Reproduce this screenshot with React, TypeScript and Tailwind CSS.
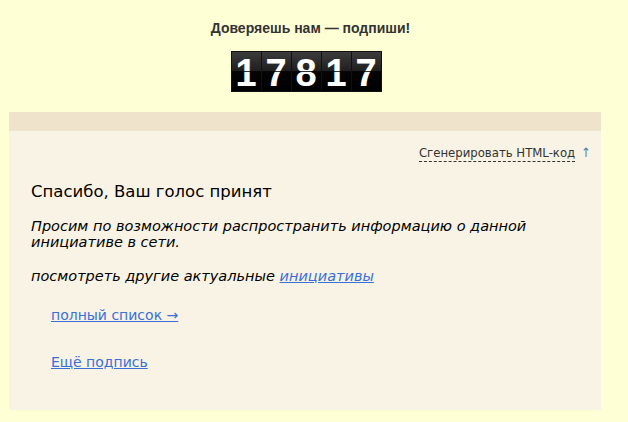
import React from 'react';

const digits = ['1', '7', '8', '1', '7'];

const Counter = () => (
  <div className="flex gap-px bg-[#111] p-px">
    {digits.map((d, i) => (
      <div
        key={i}
        className="relative w-[29px] h-[39px] flex items-center justify-center bg-[linear-gradient(to_bottom,#3c3c3c_0%,#1e1e1e_50%,#050505_50%,#000_100%)]"
      >
        <span className="text-white font-bold text-[38px] leading-none font-['Liberation_Sans',Arial,sans-serif] mt-[2px]">
          {d}
        </span>
        <div className="absolute left-0 right-0 top-[19px] h-px bg-black/80" />
      </div>
    ))}
  </div>
);

const App = () => {
  return (
    <div className="min-h-[422px] bg-[#ffffd6] pt-[19px] pb-[12px] font-['DejaVu_Sans',Verdana,sans-serif]">
      <div className="mr-[16px]">
        <h1 className="text-center text-[14px] font-bold text-[#333] font-['Liberation_Sans',Arial,sans-serif] leading-[18px] pl-[9px]">
          Доверяешь нам — подпиши!
        </h1>
        <div className="flex justify-center mt-[14px]">
          <Counter />
        </div>
      </div>

      <div className="ml-[9px] mr-[27px] mt-[20px]">
        <div className="h-[19px] bg-[#f0e3cc]" />
        <div className="bg-[#f8f3e4] px-[22px] pt-[13px] pb-[39px]">
          <div className="flex justify-end text-[13px] font-['DejaVu_Sans_Condensed','DejaVu_Sans',sans-serif] text-[#333] -mr-[8px]">
            <span className="border-b border-dashed border-[#333] leading-[17px] mr-[6px]">
              Сгенерировать HTML-код
            </span>
            <span className="text-[#5a7ea8] leading-[17px] -mr-[4px]">↑</span>
          </div>

          <p className="mt-[20px] text-[16.5px] text-black leading-[20px]">Спасибо, Ваш голос принят</p>

          <p className="mt-[16px] text-[14.5px] italic text-black leading-[16px]">
            Просим по возможности распространить информацию о данной инициативе в сети.
          </p>

          <p className="mt-[16px] text-[14.5px] italic text-black leading-[20px]">
            посмотреть другие актуальные{' '}
            <a href="#" className="text-[#3a6fd8] underline">
              инициативы
            </a>
          </p>

          <div className="pl-[20px] text-[14px] leading-[18px]">
            <p className="mt-[20px]">
              <a href="#" className="text-[#3a6fd8] underline">
                полный список →
              </a>
            </p>
            <p className="mt-[29px]">
              <a href="#" className="text-[#3a6fd8] underline">
                Ещё подпись
              </a>
            </p>
          </div>
        </div>
      </div>
    </div>
  );
};

export default App;
